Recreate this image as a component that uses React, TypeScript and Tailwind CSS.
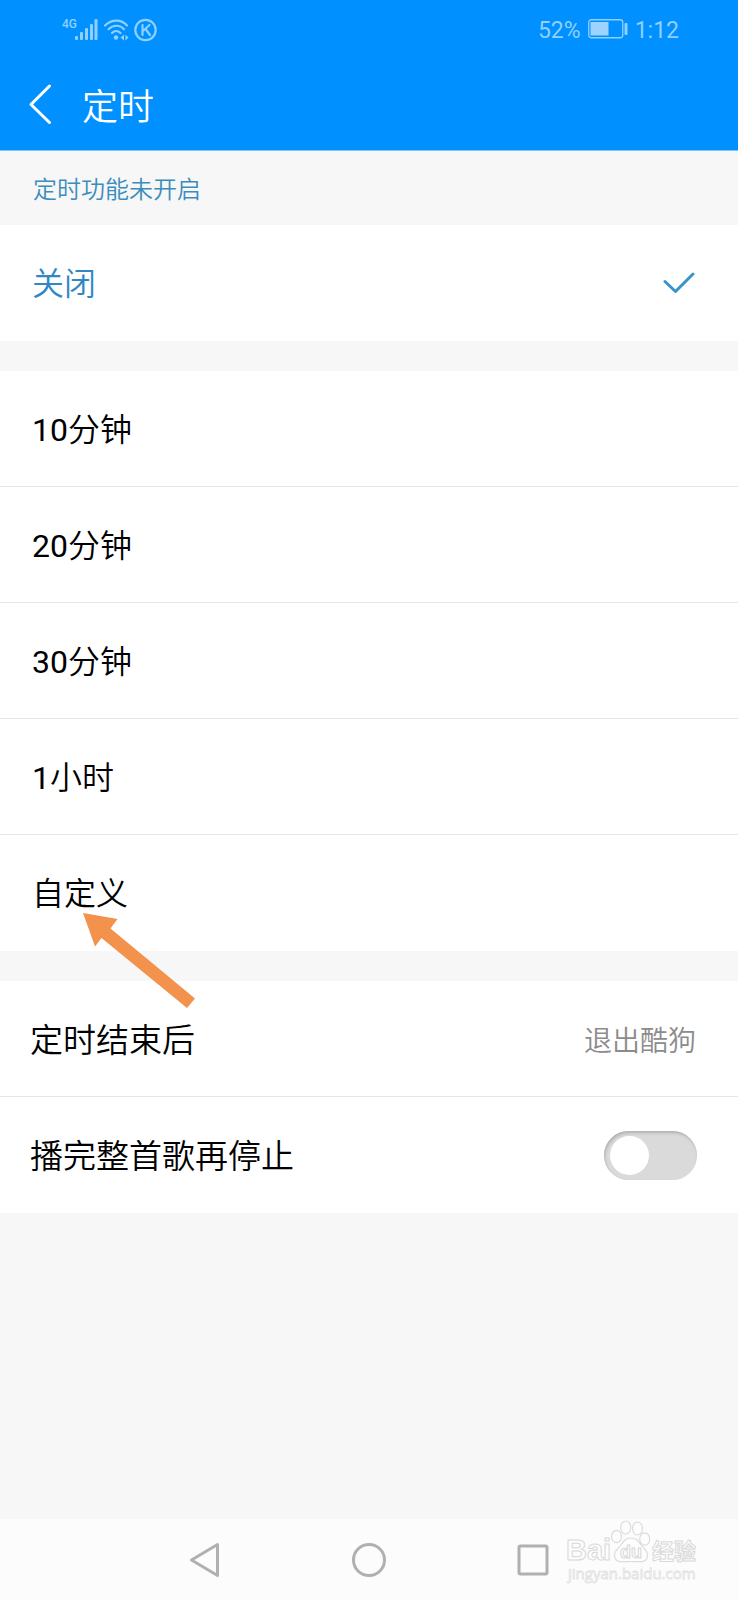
import React, { useState } from 'react'

type OptionProps = {
  label: string
  value: string
  current: string
  onSelect: (value: string) => void
  children?: React.ReactNode
}

const times = ['10分钟', '20分钟', '30分钟', '1小时', '自定义']

const StatusBar = () => {
  return (
    <div className="flex h-[58px] items-center justify-between pl-[62px] pr-[59px] text-[#8fd0ff]">
      <svg width="98" height="28" viewBox="0 0 98 28" aria-hidden="true">
        <text x="0" y="13" fontSize="12" fontWeight="500" fontFamily="Roboto, sans-serif" fill="currentColor">4G</text>
        <g fill="currentColor">
          <rect x="13" y="21" width="3" height="4" rx="1" />
          <rect x="18" y="17" width="3" height="8" rx="1" />
          <rect x="23" y="13" width="3" height="12" rx="1" />
          <rect x="28" y="9" width="3" height="16" rx="1" />
          <rect x="32.5" y="4" width="3" height="21" rx="1" />
          <circle cx="54" cy="22.5" r="2.2" />
          <path d="M62 19.5v6l-3.5-3zM63.5 19.5v6l3-3z" />
        </g>
        <g fill="none" stroke="currentColor" strokeWidth="2.2" strokeLinecap="round">
          <path d="M43 10.5c6.5-6.6 16.5-6.6 22 0M46.5 14.2c4.5-4.6 11.5-4.6 15.5 0M50 18c2.6-2.5 6-2.5 8.5 0" />
          <circle cx="83.5" cy="15" r="10.2" />
          <path d="M80.5 10v10M87.5 10l-6 5.5M83.5 14l4.5 6" />
        </g>
      </svg>
      <div className="flex items-center gap-[7px] text-[23px] leading-none">
        <span className="pt-[2px]">52%</span>
        <svg width="40" height="20" viewBox="0 0 40 20" aria-hidden="true">
          <rect x="0.75" y="0.75" width="34" height="18" rx="2.5" fill="none" stroke="currentColor" strokeWidth="1.3" />
          <rect x="2.5" y="3" width="18" height="13.5" fill="#9fd3ff" />
          <rect x="36.5" y="4" width="3" height="12" rx="1" fill="currentColor" />
        </svg>
        <span className="pt-[2px]">1:12</span>
      </div>
    </div>
  )
}

const Option = ({ label, value, current, onSelect, children }: OptionProps) => {
  const checked = current === value
  return (
    <label className={`relative flex h-[116px] items-center justify-between pl-[32px] pr-[43px] ${checked ? 'text-[#2f87c3]' : ''}`}>
      <input
        type="radio"
        name="timer"
        className="sr-only"
        checked={checked}
        onChange={() => onSelect(value)}
      />
      <span className="pt-[2px]">{label}</span>
      {checked && (
        <svg width="32" height="22" viewBox="0 0 32 22" fill="none" stroke="#3a92cb" strokeWidth="3" strokeLinecap="round" strokeLinejoin="round" aria-hidden="true">
          <path d="M2 9.5l10.5 10L30 2" />
        </svg>
      )}
      {children}
    </label>
  )
}

const Arrow = () => {
  return (
    <svg className="pointer-events-none absolute left-[80px] top-[76px] z-10" width="118" height="100" viewBox="0 0 118 100" aria-hidden="true">
      <path d="M3 2l34.5 6-7 9.5 84.5 70-8 9.5-85.500-70-6.500 8.500z" fill="#f2924c" />
    </svg>
  )
}

const Watermark = () => {
  return (
    <svg className="pointer-events-none absolute right-[36px] top-0" width="136" height="68" viewBox="0 0 136 68" aria-hidden="true">
      <g fill="#fdfdfd" stroke="#dcdcdc" strokeWidth="1.2">
        <ellipse cx="59.7" cy="8.5" rx="5" ry="6.5" />
        <ellipse cx="71.5" cy="9.5" rx="5" ry="6.5" />
        <ellipse cx="50.5" cy="17.5" rx="5" ry="6.2" />
        <ellipse cx="78.7" cy="20" rx="5" ry="6.2" />
        <path d="M65 19c6 0 8 4 11 8s7 6 5 12c-2 5-7 3.5-16 3.5S51 44 49 39c-2-6 2-8 5-12s5-8 11-8z" />
      </g>
      <g fill="#fdfdfd" stroke="#d9d9d9" strokeWidth="1" fontWeight="700">
        <text x="0" y="41" fontSize="29" fontFamily="Liberation Sans, sans-serif">Bai</text>
        <text x="54" y="39" fontSize="18" fontFamily="Liberation Sans, sans-serif">du</text>
        <text x="86" y="40" fontSize="22" fontFamily="Noto Sans CJK SC, sans-serif">经验</text>
      </g>
      <text x="2" y="60" fontSize="15" fontFamily="Open Sans, sans-serif" fill="#fdfdfd" stroke="#e2e2e2" strokeWidth="0.8">jingyan.baidu.com</text>
    </svg>
  )
}

const App = () => {
  const [timer, setTimer] = useState('off')
  const [finishSong, setFinishSong] = useState(false)

  return (
    <div className="flex min-h-screen flex-col bg-[#f7f7f7] font-[Roboto,'Noto_Sans_CJK_SC_DemiLight','Noto_Sans_CJK_SC',sans-serif] text-[32px] leading-none text-black">
      <header className="h-[151px] border-b border-[#7cc4f8] bg-[#0090ff]">
        <StatusBar />
        <div className="flex h-[92px] items-center gap-[30px] pl-[28px] text-white">
          <button type="button" aria-label="返回">
            <svg width="24" height="42" viewBox="0 0 24 42" fill="none" stroke="currentColor" strokeWidth="3" strokeLinecap="round" strokeLinejoin="round">
              <path d="M21.5 3L3 21.5 21.5 39.5" />
            </svg>
          </button>
          <h1 className="pt-[8px] text-[36px] font-[350]">定时</h1>
        </div>
      </header>

      <main className="flex-1">
        <p className="flex h-[74px] items-center px-[33px] pt-[4px] text-[24px] font-[350] text-[#3b8dbd]">定时功能未开启</p>

        <div className="bg-white font-[350]">
          <Option label="关闭" value="off" current={timer} onSelect={setTimer} />
        </div>

        <div className="mt-[30px] divide-y divide-[#e6e6e6] bg-white">
          {times.map((time) => (
            <Option key={time} label={time} value={time} current={timer} onSelect={setTimer}>
              {time === '自定义' && <Arrow />}
            </Option>
          ))}
        </div>

        <div className="mt-[30px] divide-y divide-[#e6e6e6] bg-white text-[33px] font-[350]">
          <button type="button" className="flex h-[116px] w-full items-center justify-between pl-[30px] pr-[42px]">
            <span className="pt-[3px]">定时结束后</span>
            <span className="pt-[6px] text-[28px] text-[#8c8c8c]">退出酷狗</span>
          </button>
          <label className="flex h-[116px] items-center justify-between pl-[30px] pr-[41px]">
            <span className="pt-[3px]">播完整首歌再停止</span>
            <input
              type="checkbox"
              role="switch"
              checked={finishSong}
              onChange={(e) => setFinishSong(e.target.checked)}
              className="h-[49px] w-[93px] appearance-none rounded-full bg-[#dadada] px-[6px] py-[5px] shadow-[inset_1px_2px_3px_#b0b0b0] before:block before:size-[39px] before:rounded-full before:bg-white checked:bg-[#0090ff] checked:before:ml-auto"
            />
          </label>
        </div>
      </main>

      {/* thanh điều hướng */}
      <nav className="relative h-[81px] bg-[#fcfcfc]">
        <div className="mx-auto grid h-full w-2/3 grid-cols-3 place-items-center text-[#b0b0b0]">
          <button type="button" aria-label="Back">
            <svg width="36" height="36" viewBox="0 0 36 36" fill="none" stroke="currentColor" strokeWidth="3" strokeLinejoin="round">
              <path d="M30.5 2.5v31L4.5 18z" />
            </svg>
          </button>
          <button type="button" aria-label="Home">
            <svg width="36" height="36" viewBox="0 0 36 36" fill="none" stroke="currentColor" strokeWidth="3">
              <circle cx="18" cy="18" r="15.5" />
            </svg>
          </button>
          <button type="button" aria-label="Recent">
            <svg width="36" height="36" viewBox="0 0 36 36" fill="none" stroke="currentColor" strokeWidth="3">
              <rect x="4" y="4" width="28" height="28" rx="1.5" />
            </svg>
          </button>
        </div>
        <Watermark />
      </nav>
    </div>
  )
}

export default App
